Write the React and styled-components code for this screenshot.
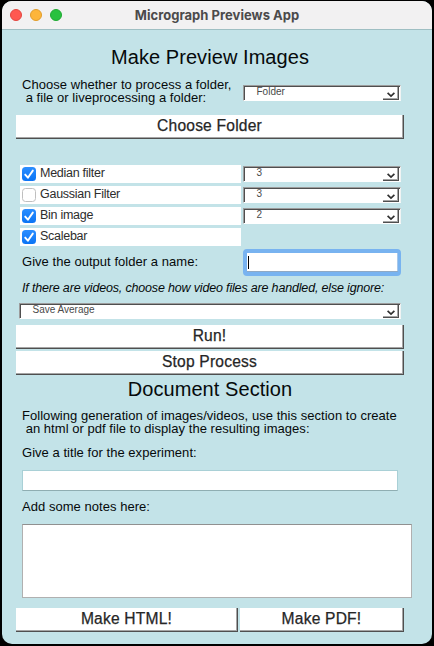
import React from 'react';
import styled, { createGlobalStyle, css } from 'styled-components';

const Global = createGlobalStyle`
  html, body { margin: 0; padding: 0; background: #000; }
  * { box-sizing: border-box; }
  body { width: 434px; height: 646px; overflow: hidden; }
`;

const Window = styled.main`
  width: 430px;
  height: 643px;
  margin: 1px 0 0 2px;
  border-radius: 10px;
  overflow: hidden;
  background: #c3e3e8;
  color: #060a0b;
  font-family: 'Liberation Sans', Arial, sans-serif;
  font-size: 13px;
`;

const TitleBar = styled.header`
  display: grid;
  grid-template-columns: 68px 1fr 68px;
  align-items: center;
  height: 29px;
  background: #f2f1f2;
  border-bottom: 1px solid #9fbfc3;
`;

const Lights = styled.div`
  display: flex;
  gap: 8px;
  padding-left: 8px;
`;

const Light = styled.span`
  width: 12px;
  height: 12px;
  border-radius: 50%;
  background: ${(p) => p.$fill};
  border: 1px solid ${(p) => p.$edge};
`;

const WindowTitle = styled.h1`
  margin: 0;
  text-align: center;
  white-space: nowrap;
  font: 700 13px/16px Inter, sans-serif;
  letter-spacing: 0.03px;
  color: #4b4a4b;
`;

const Body = styled.div`
  display: flex;
  flex-direction: column;
  padding: 0 28px 0 14px;
`;

const Heading = styled.h2`
  margin: ${(p) => p.$top}px 0 0 0;
  text-align: center;
  white-space: nowrap;
  font-weight: 400;
  font-size: 20px;
  line-height: 24px;
  letter-spacing: 0.07px;
`;

const Label = styled.p`
  margin: ${(p) => (p.$top || 0) - (p.$italic ? 0 : 1)}px 0 ${(p) => (p.$italic ? 0 : 1)}px 6px;
  white-space: pre;
  font-size: ${(p) => (p.$italic ? '12.5px' : '13px')};
  line-height: 13px;
  font-style: ${(p) => (p.$italic ? 'italic' : 'normal')};
  letter-spacing: ${(p) => (p.$italic ? '-0.17px' : '0.04px')};
`;

const Field = styled.div`
  display: grid;
  grid-template-columns: 227px 158px;
  height: ${(p) => p.$height}px;
  margin-top: ${(p) => p.$top}px;
`;

const SelectBox = styled.div`
  display: flex;
  justify-content: space-between;
  width: ${(p) => p.$width || 158}px;
  height: 16px;
  margin: ${(p) => p.$top || 0}px 0 0 ${(p) => p.$left || 0}px;
  padding: 0 1px 0 12.5px;
  background: #fff;
  border: 1px solid;
  border-color: #9c9c9c #f0f3f3 #fff #9c9c9c;
  box-shadow: inset 1px 1px 0 #4f4f4f;
  color: #4a4a4a;
  font-size: 10px;
  line-height: 11px;
`;

const SelectArrow = styled.span`
  width: 16px;
  height: 13px;
  margin-top: 1px;
  border-right: 1px solid #4f4f4f;
  border-bottom: 1px solid #4f4f4f;
  box-shadow: inset -1px -1px 0 #a5a5a5;
  svg { display: block; margin: 5px 0 0 4px; }
`;

const Button = styled.button`
  width: ${(p) => p.$width}px;
  height: 24px;
  margin: ${(p) => p.$top || 0}px 0 0;
  padding: 0 0 2px;
  background: #fff;
  border: solid #4f4f4f;
  border-width: 0 1px 1px 0;
  box-shadow: inset -1px -1px 0 #a5a5a5;
  color: #262626;
  font-family: inherit;
  font-size: 15.6px;
  line-height: 20px;
  letter-spacing: 0.2px;
  -webkit-text-stroke: 0.25px #262626;
`;

const Options = styled.div`
  display: grid;
  grid-template-columns: 221px 158px;
  grid-auto-rows: 18px;
  gap: 3px 2px;
  margin: 26px 0 0 4px;
`;

const CheckRow = styled.label`
  display: flex;
  background: #fff;
  color: #2d2d2d;
  font-size: 12.5px;
  line-height: 16px;
  letter-spacing: -0.27px;
`;

const CheckBox = styled.span`
  width: 14px;
  height: 14px;
  margin: 2px 4px 0 2px;
  border-radius: 3.5px;
  ${(p) => (p.$on
    ? css`background: linear-gradient(#2b8eff, #0a74f5);`
    : css`background: #fff; border: 1px solid #bfbfbf;`)}
  svg { display: block; }
`;

const TextInput = styled.div`
  height: ${(p) => p.$height}px;
  width: ${(p) => p.$width}px;
  margin: ${(p) => p.$top || 0}px 0 0 ${(p) => p.$left || 0}px;
  background: #fff;
  border: 1px solid #a9d0d6;
  border-bottom-color: #8faeb2;
`;

const FocusedInput = styled.div`
  width: 158px;
  height: 27px;
  padding: 3px 1px;
  border: 4px solid #78b3f0;
  border-right-width: 3px;
  border-radius: 4px;
  background: #fff;
  box-shadow: inset 0 -1px 0 #8fa9c4, inset -1px 0 0 #a8c8ea;
`;

const Caret = styled.span`
  display: block;
  width: 1px;
  height: 13px;
  background: #000;
`;

const Notes = styled.div`
  width: 390px;
  height: 74px;
  margin: 10px 0 0 6px;
  background: #fff;
  border: 1px solid #b0b0b0;
  border-top-color: #909090;
`;

const Actions = styled.div`
  display: flex;
  gap: 2px;
  margin-top: 10px;
`;

function Select({ children, ...rest }) {
  return (
    <SelectBox {...rest}>
      {children}
      <SelectArrow>
        <svg width="8" height="6" viewBox="0 0 8 6">
          <path d="M0.6 0.8 L4 4 L7.4 0.8" fill="none" stroke="#303030" strokeWidth="1.7" />
        </svg>
      </SelectArrow>
    </SelectBox>
  );
}

function Check({ on, children }) {
  return (
    <CheckRow>
      <CheckBox $on={on}>
        {on && (
          <svg width="14" height="14" viewBox="0 0 14 14">
            <path d="M3.2 7.6 L5.9 10.7 L10.8 3.6" fill="none" stroke="#fff" strokeWidth="1.9" strokeLinecap="round" strokeLinejoin="round" />
          </svg>
        )}
      </CheckBox>
      {children}
    </CheckRow>
  );
}

export default function App() {
  return (
    <>
      <Global />
      <Window>
        <TitleBar>
          <Lights>
            <Light $fill="#ff5850" $edge="#e2463f" />
            <Light $fill="#fdb53a" $edge="#e09c2b" />
            <Light $fill="#28c13f" $edge="#1fa932" />
          </Lights>
          <WindowTitle>Micrograph Previews App</WindowTitle>
        </TitleBar>
        <Body>
          <Heading $top={15}>Make Preview Images</Heading>
          <Field $top={10} $height={26}>
            <Label>{'Choose whether to process a folder,\n a file or liveprocessing a folder:'}</Label>
            <Select $top={6}>Folder</Select>
          </Field>
          <Button $width={388} $top={10}>Choose Folder</Button>
          <Options>
            <Check on>Median filter</Check>
            <Select $top={1}>3</Select>
            <Check>Gaussian Filter</Check>
            <Select $top={1}>3</Select>
            <Check on>Bin image</Check>
            <Select $top={1}>2</Select>
            <Check on>Scalebar</Check>
          </Options>
          <Field $top={3} $height={27}>
            <Label $top={7}>Give the output folder a name:</Label>
            <FocusedInput><Caret /></FocusedInput>
          </Field>
          <Label $top={6} $italic>If there are videos, choose how video files are handled, else ignore:</Label>
          <Select $top={8} $left={3} $width={382}>Save Average</Select>
          <Button $width={388} $top={6}>Run!</Button>
          <Button $width={388} $top={2}>Stop Process</Button>
          <Heading $top={2}>Document Section</Heading>
          <Label $top={9}>{'Following generation of images/videos, use this section to create\n an html or pdf file to display the resulting images:'}</Label>
          <Label $top={11}>Give a title for the experiment:</Label>
          <TextInput $top={10} $left={6} $width={376} $height={21} />
          <Label $top={10}>Add some notes here:</Label>
          <Notes />
          <Actions>
            <Button $width={222}>Make HTML!</Button>
            <Button $width={164}>Make PDF!</Button>
          </Actions>
        </Body>
      </Window>
    </>
  );
}
